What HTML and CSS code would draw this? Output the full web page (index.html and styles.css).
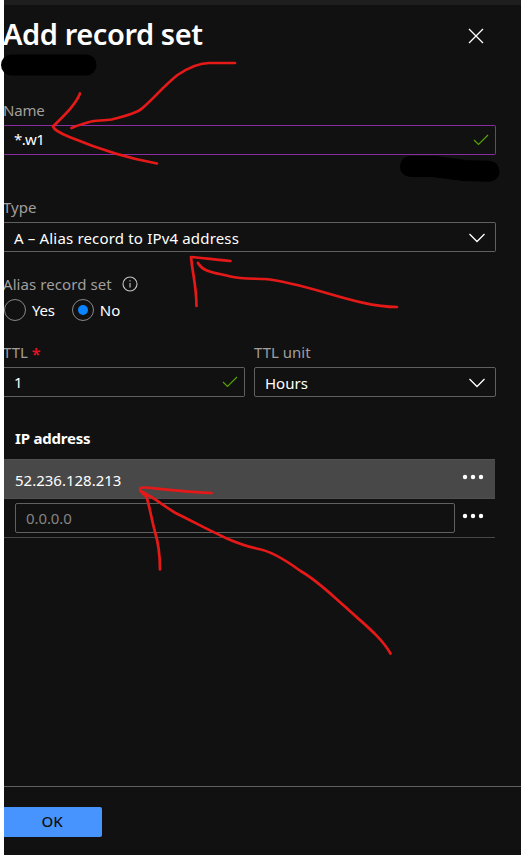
FILE: index.html
```html
<!DOCTYPE html>
<html lang="en">
<head>
<meta charset="utf-8">
<title>Add record set</title>
<link rel="stylesheet" href="styles.css">
</head>
<body>
<main class="blade">
  <div class="topbar"></div>
  <header class="header">
    <h1><span class="t-title">Add record set</span></h1>
    <svg class="close" width="16" height="16" viewBox="0 0 16 16"><path d="M1 1L15 15M15 1L1 15"/></svg>
  </header>
  <section class="field name-field">
    <label class="label"><span class="t-name">Name</span></label>
    <div class="box box-active"><span class="t-w1">*.w1</span><svg class="check" width="16" height="12" viewBox="0 0 16 12"><path d="M1 6L5.5 10.5L15 1"/></svg></div>
  </section>
  <section class="field type-field">
    <label class="label"><span class="t-type">Type</span></label>
    <div class="box"><span class="t-alias">A – Alias record to IPv4 address</span><svg class="chevron" width="18" height="10" viewBox="0 0 18 10"><path d="M1.5 1L9 8.5L16.500 1"/></svg></div>
  </section>
  <section class="alias">
    <div class="label alias-label"><span class="t-set">Alias record set</span><svg class="info" width="16" height="16" viewBox="0 0 16 16"><circle cx="8" cy="8" r="7"/><path d="M8 7V11.500M8 4.300V5.500"/></svg></div>
    <div class="radios">
      <span class="radio"></span><span class="radio-text t-yes">Yes</span>
      <span class="radio selected"></span><span class="radio-text t-no">No</span>
    </div>
  </section>
  <section class="ttl">
    <div class="field ttl-value">
      <label class="label"><span class="t-ttl">TTL</span><b class="required">*</b></label>
      <div class="box"><span>1</span><svg class="check" width="16" height="12" viewBox="0 0 16 12"><path d="M1 6L5.5 10.5L15 1"/></svg></div>
    </div>
    <div class="field ttl-unit">
      <label class="label"><span class="t-unit">TTL unit</span></label>
      <div class="box"><span class="t-hours">Hours</span><svg class="chevron" width="18" height="10" viewBox="0 0 18 10"><path d="M1.5 1L9 8.5L16.500 1"/></svg></div>
    </div>
  </section>
  <section class="grid">
    <h2><span class="t-ip">IP address</span></h2>
    <div class="row row-selected"><span class="t-addr">52.236.128.213</span><svg class="dots" width="22" height="6" viewBox="0 0 22 6"><circle cx="3" cy="3" r="2.200"/><circle cx="11" cy="3" r="2.200"/><circle cx="19" cy="3" r="2.200"/></svg></div>
    <div class="row row-new"><div class="box placeholder"><span class="t-zero">0.0.0.0</span></div><svg class="dots" width="22" height="6" viewBox="0 0 22 6"><circle cx="3" cy="3" r="2.200"/><circle cx="11" cy="3" r="2.200"/><circle cx="19" cy="3" r="2.200"/></svg></div>
  </section>
  <footer class="footer"><button class="ok"><span class="t-ok">OK</span></button></footer>
</main>
<svg class="ink" width="521" height="855" viewBox="0.5 0 521 855">
  <g class="redaction">
    <path d="M12 65H86.500"/>
    <path d="M411 166.500H434L465 170.500L489.500 171.300"/>
  </g>
  <g class="arrows">
    <path d="M235.500 63H210C198 63 187 69 178 75C164 86 154 99 143 108C139 112 131 115 112 119.500C102 121 94 120 88 122.500C82 124 77 126 72 128"/>
    <path d="M80.500 93.500C76 105 64 116 53.500 126.500C55 131 65 135 70 137C99 149 126 158 157.500 163.500"/>
    <path d="M397.500 307C356 307 309 283 265 279C253 278.500 240 279 231 276.500C219 273 204 273 198.500 263"/>
    <path d="M231 261C218 260 204 258 191.500 257C193 273 197 287 197 306"/>
    <path d="M391 653.500C381 636 363 623 346 607C330 593 317 580 301 571C282 557 267 550 257 548.500C229 542 205 527 176 513C163 505 154 497 141 491"/>
    <path d="M212 493C186 492 170 490 152 488C143 487 138 487 142 492L147 497C150 506 152 519 155 530C159 543 160.500 555 160.500 569.500"/>
  </g>
</svg>
</body>
</html>
```
FILE: styles.css
```css
* { box-sizing: border-box; }
body {
  margin: 0;
  height: 855px;
  position: relative;
  overflow: hidden;
  background: #fff;
  color: #fff;
  font: 15px/20px "Noto Sans", "Open Sans", sans-serif;
}
svg { fill: none; flex: none; display: block; }
.blade {
  display: flex;
  flex-direction: column;
  height: 855px;
  margin-left: 4px;
  overflow: hidden;
  background: #111;
}
.topbar { height: 5px; background: #1e1e1e; flex: none; }
.header {
  display: flex;
  justify-content: space-between;
  align-items: center;
  height: 60px;
  padding-right: 37px;
}
h1 { margin: 0 0 0 -1px; font-size: 29px; line-height: 40px; font-weight: 600; padding-bottom: 3px; letter-spacing: -0.42px; }
.close { stroke: #fff; stroke-width: 1.3; margin-top: 1px; }
.label { display: flex; align-items: center; height: 20px; margin-left: -1px; color: #a19f9d; white-space: nowrap; }
.field .label { margin-bottom: 5px; }
.box {
  display: flex;
  align-items: center;
  justify-content: space-between;
  height: 30px;
  padding: 0 6px 0 9px;
  border: 1px solid #606060;
  border-radius: 2px;
  white-space: nowrap;
}
.name-field .box, .type-field .box, .ttl-value .box { border-left: 0; border-radius: 0 2px 2px 0; padding-left: 10px; }
.name-field, .type-field { margin-right: 25px; }
.name-field { margin-top: 35px; }
.name-field .box-active { border-color: #8a2da5; }
.type-field { margin-top: 42px; }
.t-name { letter-spacing: -0.2px; }
.t-w1 { letter-spacing: -0.6px; padding-bottom: 2px; }
.t-alias { letter-spacing: 0.17px; padding-top: 1px; }
.t-set { letter-spacing: 0.08px; }
.t-yes { letter-spacing: -0.2px; }
.t-ip { letter-spacing: -0.2px; }
.t-addr { padding-top: 2px; }
.t-zero { letter-spacing: -0.1px; }
.t-hours { padding-top: 1px; }
.check { stroke: #57a300; stroke-width: 1.2; }
.chevron { stroke: #fff; stroke-width: 1.3; margin: 2px 3px 0 0; }
.alias { margin-top: 22px; }
.alias-label { height: 19px; margin-bottom: 6px; }
.info { margin-left: 10px; stroke: #c8c6c4; stroke-width: 1.1; }
.radios { display: flex; align-items: center; height: 22px; }
.radio { width: 22px; height: 22px; border: 1px solid #8a8886; border-radius: 50%; display: grid; place-items: center; }
.radio.selected { margin-left: 17px; }
.radio.selected::after { content: ""; width: 10px; height: 10px; border-radius: 50%; background: #0a84ff; }
.radio-text { margin-left: 6px; }
.ttl { display: grid; grid-template-columns: 241px 242px; gap: 9px; margin-top: 21px; }
.ttl-unit .label { margin-left: 0; }
.ttl-unit .box { padding-left: 10px; }
.required { color: #e81123; margin-left: 4px; font-size: 16px; font-weight: 600; padding-top: 3px; }
.grid { width: 491px; }
h2 { margin: 0; height: 62px; padding: 31px 0 0 11px; font-size: 15px; line-height: 20px; font-weight: 700; }
.row { display: flex; align-items: center; padding: 0 11px; justify-content: space-between; }
.row-selected { height: 40px; background: #484848; border: solid #505050; border-width: 1px 0; }
.row-selected .dots, .row-new .dots { margin-bottom: 5px; }
.row-new { height: 39px; border-bottom: 1px solid #484848; }
.placeholder { width: 440px; padding-left: 10px; color: #858381; }
.dots { fill: #fff; }
.footer { margin-top: auto; height: 69px; border-top: 1px solid #606060; padding-top: 20px; }
.ok { display: block; width: 98px; height: 30px; padding: 0 2px 2px 0; border: 0; border-radius: 0 2px 2px 0; background: #4894fe; color: #111; font: inherit; font-weight: 500; }
.ink { position: absolute; top: 0; left: 0; stroke-linecap: round; stroke-linejoin: round; pointer-events: none; }
.redaction { stroke: #000; stroke-width: 21; }
.arrows { stroke: #e61919; stroke-width: 2.7; }
```
